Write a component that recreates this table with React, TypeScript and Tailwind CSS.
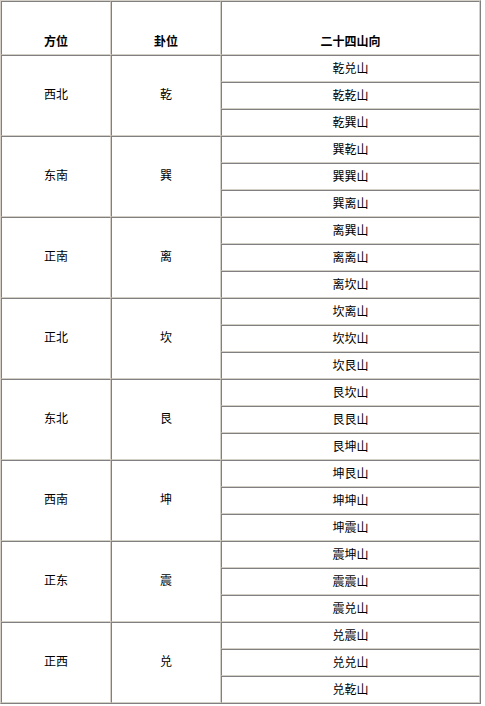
const groups = [
  { dir: "西北", gua: "乾", mountains: ["乾兑山", "乾乾山", "乾巽山"] },
  { dir: "东南", gua: "巽", mountains: ["巽乾山", "巽巽山", "巽离山"] },
  { dir: "正南", gua: "离", mountains: ["离巽山", "离离山", "离坎山"] },
  { dir: "正北", gua: "坎", mountains: ["坎离山", "坎坎山", "坎艮山"] },
  { dir: "东北", gua: "艮", mountains: ["艮坎山", "艮艮山", "艮坤山"] },
  { dir: "西南", gua: "坤", mountains: ["坤艮山", "坤坤山", "坤震山"] },
  { dir: "正东", gua: "震", mountains: ["震坤山", "震震山", "震兑山"] },
  { dir: "正西", gua: "兑", mountains: ["兑震山", "兑兑山", "兑乾山"] },
];

// inset look for every cell, outset for the table itself
const edge =
  "border border-t-[#808080] border-l-[#808080] border-b-[#d4d0c8] border-r-[#d4d0c8] p-0 text-center";
const head = edge + " align-bottom pb-[6px] font-bold";
const cell = edge + " align-middle";

export default function App() {
  return (
    <div className="min-h-screen bg-white text-[12px] leading-[14px] text-black [font-family:'Noto_Sans_CJK_SC',sans-serif]">
      <table className="w-[481px] border-separate border-spacing-0 border border-t-[#d4d0c8] border-l-[#d4d0c8] border-b-[#808080] border-r-[#808080]">
        <thead>
          <tr className="h-[54px]">
            <th className={head + " w-[110px]"}>方位</th>
            <th className={head + " w-[110px]"}>卦位</th>
            <th className={head}>二十四山向</th>
          </tr>
        </thead>
        <tbody>
          {groups.map((g) =>
            g.mountains.map((m, i) => (
              <tr key={m} className="h-[27px]">
                {i === 0 && (
                  <>
                    <td rowSpan={3} className={cell + " pb-[3px]"}>
                      {g.dir}
                    </td>
                    <td rowSpan={3} className={cell + " pb-[3px]"}>
                      {g.gua}
                    </td>
                  </>
                )}
                <td className={cell + " pb-[1px]"}>{m}</td>
              </tr>
            ))
          )}
        </tbody>
      </table>
    </div>
  );
}
